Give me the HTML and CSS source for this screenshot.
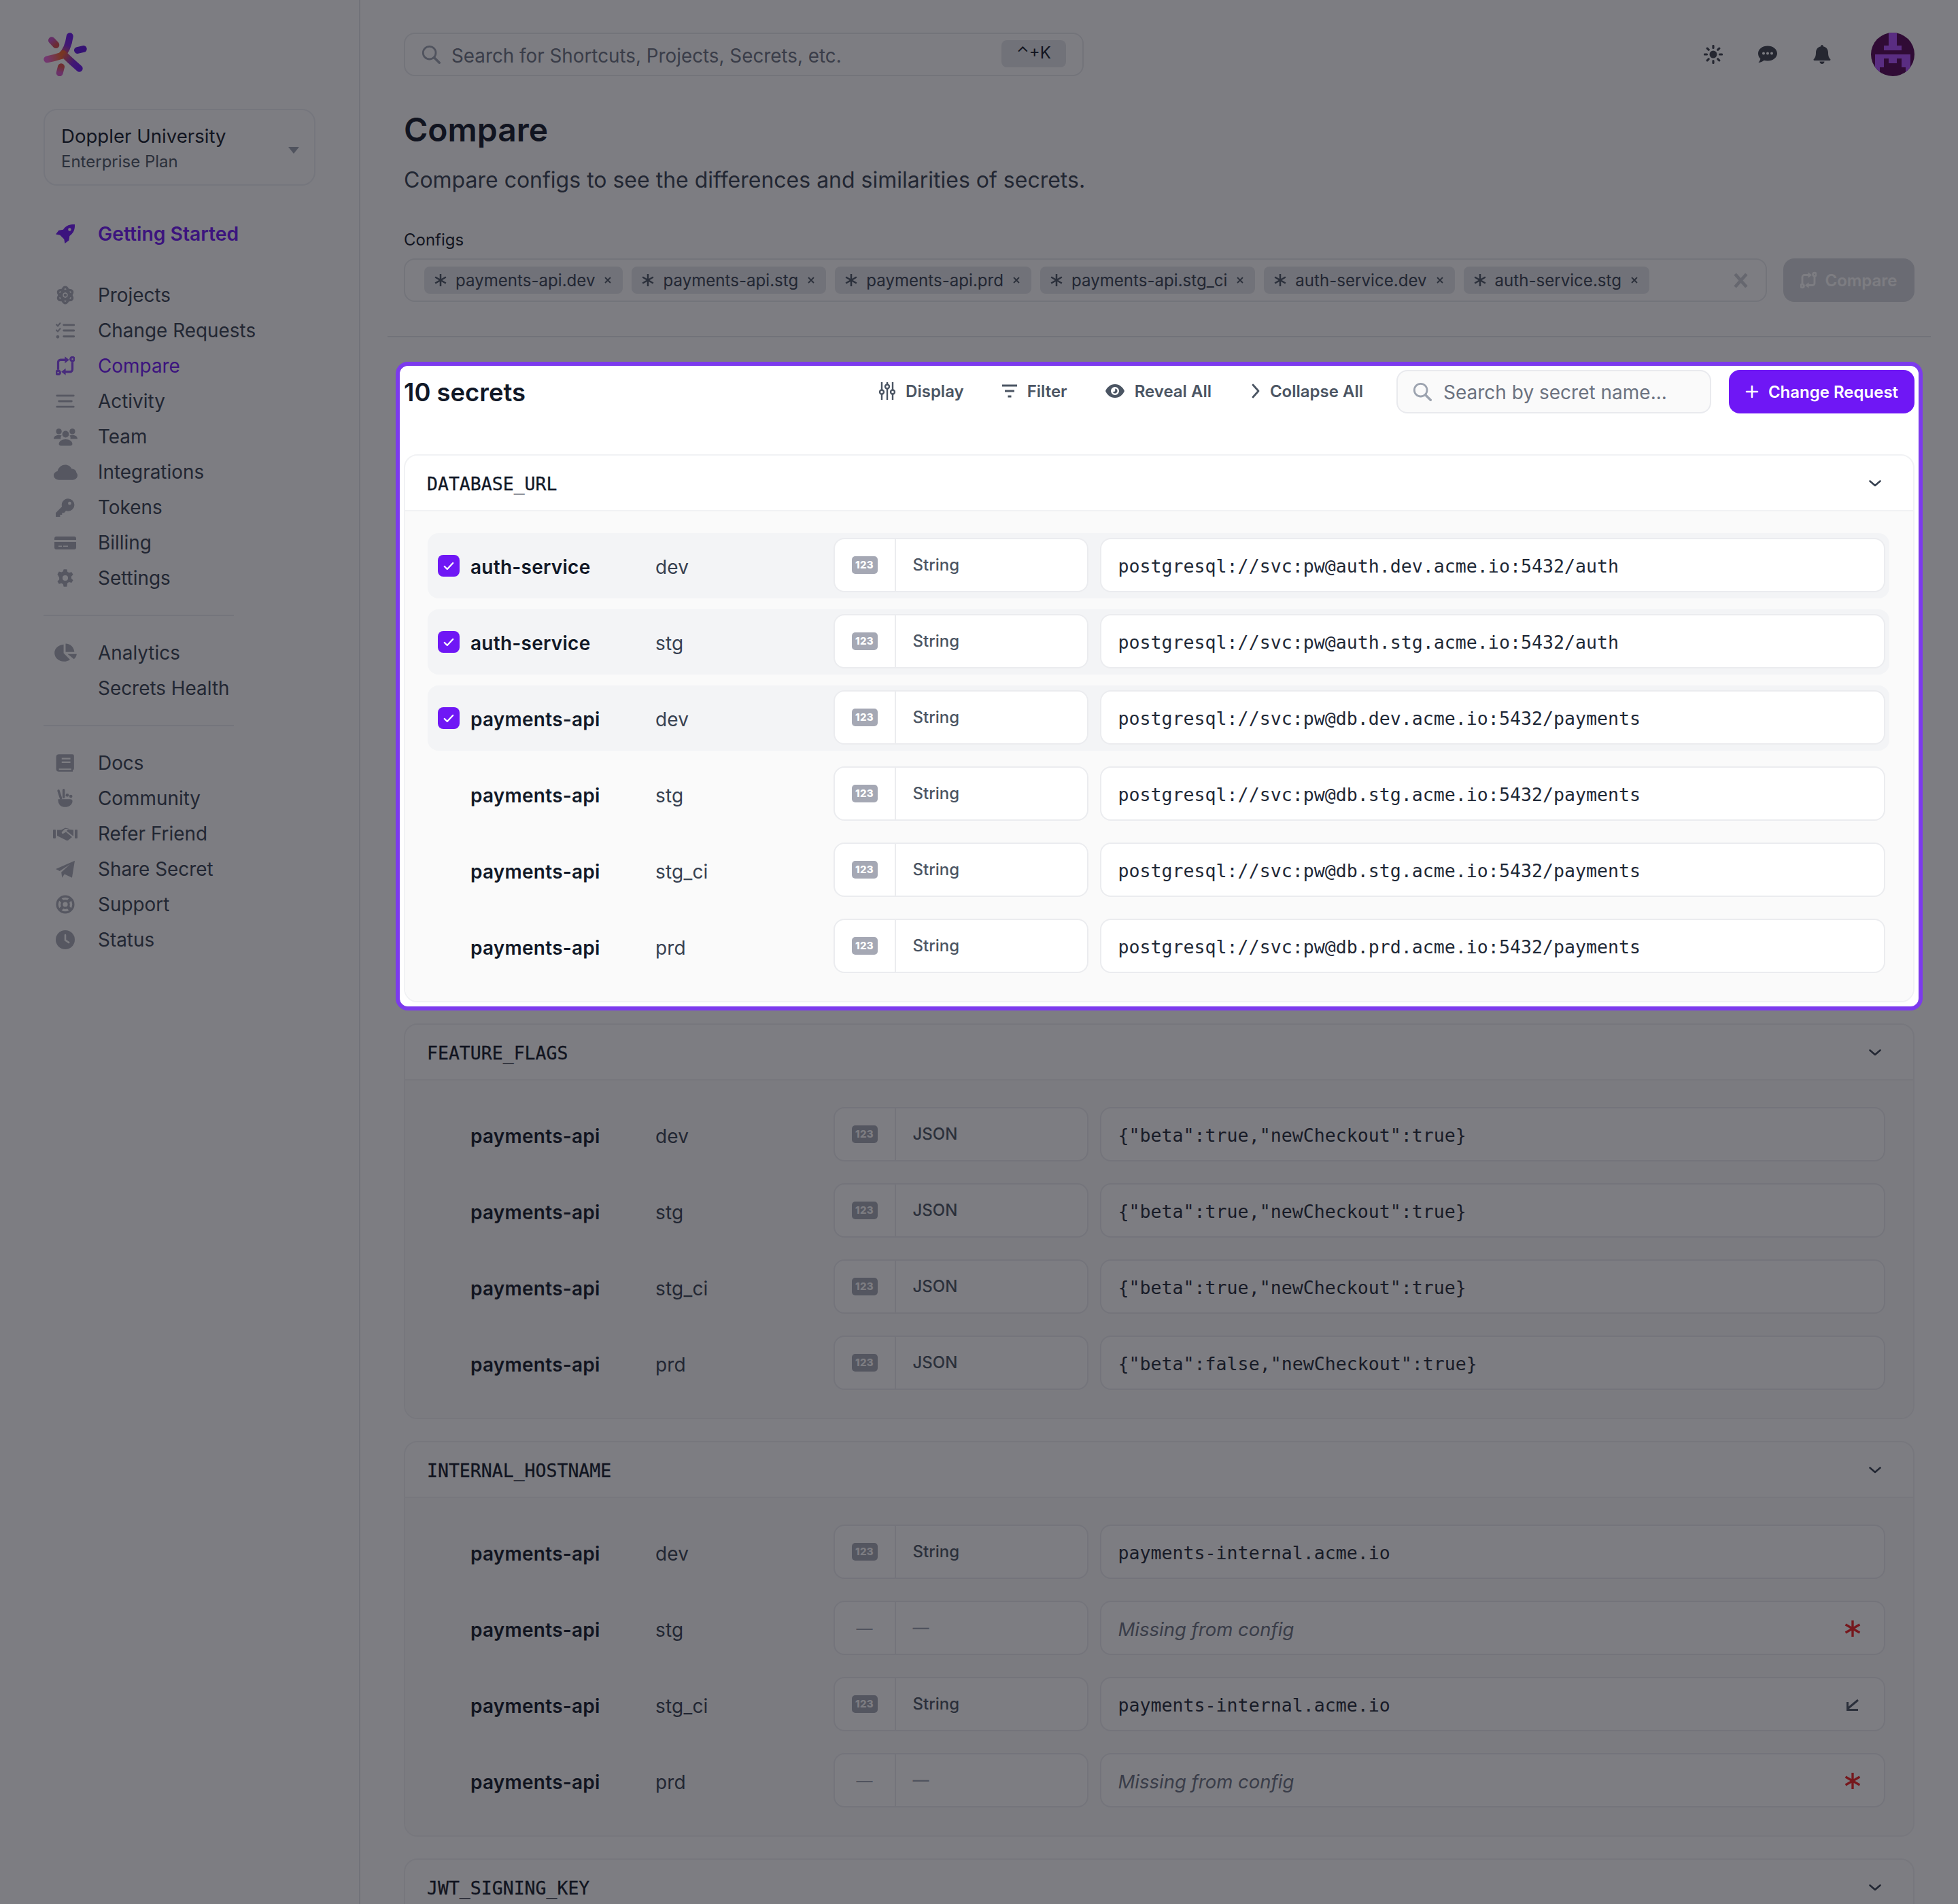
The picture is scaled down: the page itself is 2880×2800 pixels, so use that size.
FILE: index.html
```html
<!DOCTYPE html>
<html lang="en">
<head>
<meta charset="utf-8">
<title>Compare</title>
<link rel="stylesheet" href="styles.css">
</head>
<body>
<svg class="sprite" xmlns="http://www.w3.org/2000/svg">
  <defs>
    <linearGradient id="lg-a" gradientUnits="userSpaceOnUse" x1="26" y1="34" x2="39" y2="5"><stop offset="0" stop-color="#f4622c"/><stop offset=".55" stop-color="#7d22dc"/><stop offset="1" stop-color="#6a14f0"/></linearGradient>
    <linearGradient id="lg-b" gradientUnits="userSpaceOnUse" x1="26" y1="34" x2="5" y2="39"><stop offset="0" stop-color="#f4622c"/><stop offset="1" stop-color="#e865d8"/></linearGradient>
    <linearGradient id="lg-c" gradientUnits="userSpaceOnUse" x1="26" y1="34" x2="53" y2="53"><stop offset="0" stop-color="#f4622c"/><stop offset=".6" stop-color="#7d22dc"/><stop offset="1" stop-color="#6a14f0"/></linearGradient>
    <linearGradient id="lg-d" gradientUnits="userSpaceOnUse" x1="12" y1="11" x2="18" y2="18"><stop offset="0" stop-color="#c850c0"/><stop offset="1" stop-color="#d84a50"/></linearGradient>
    <linearGradient id="lg-e" gradientUnits="userSpaceOnUse" x1="26" y1="50" x2="24" y2="59"><stop offset="0" stop-color="#e0504a"/><stop offset="1" stop-color="#d858c8"/></linearGradient>
  </defs>
  <symbol id="i-rocket" viewBox="0 0 24 24"><path fill="currentColor" fill-rule="evenodd" d="M24 0C17.500-.4 12.500 1.800 9.400 6.600L3.800 7.400 0 12.500l5.400 1 5.100 5.100 1 5.400 5.100-3.800.8-5.600C22.200 11.500 24.400 6.500 24 0zM17.500 8.400a1.900 1.900 0 1 1 0-3.800 1.900 1.900 0 0 1 0 3.800z"/></symbol>
  <symbol id="i-atom" viewBox="0 0 24 24"><g fill="none" stroke="currentColor" stroke-width="3"><ellipse cx="12" cy="12" rx="4.600" ry="10"/><ellipse cx="12" cy="12" rx="4.600" ry="10" transform="rotate(60 12 12)"/><ellipse cx="12" cy="12" rx="4.600" ry="10" transform="rotate(120 12 12)"/></g><circle cx="12" cy="12" r="2" fill="currentColor"/></symbol>
  <symbol id="i-list" viewBox="0 0 24 24"><g fill="none" stroke="currentColor" stroke-linecap="round" stroke-width="2.400"><path d="M10 5h13M10 12h13M10 19.500h13"/><path d="M.8 4.500l1.800 1.800L5.500 2.800M.8 11.500l1.800 1.800 2.900-3.500" stroke-width="1.800"/></g><circle cx="2.500" cy="20" r="2" fill="currentColor"/></symbol>
  <symbol id="i-compare" viewBox="0 0 24 24"><g fill="none" stroke="currentColor" stroke-width="2.800"><circle cx="21" cy="3.500" r="2.400"/><circle cx="3" cy="20.500" r="2.400"/><path d="M3 17V7.500a3 3 0 0 1 3-3h6"/><path d="M21 7v9.500a3 3 0 0 1-3 3h-6"/></g><path fill="currentColor" d="M11.500.2l5.500 4.300-5.500 4.300zM12.500 15.200L7 19.500l5.500 4.300z"/></symbol>
  <symbol id="i-lines" viewBox="0 0 24 24"><path fill="none" stroke="currentColor" stroke-width="2.400" stroke-linecap="round" d="M1.500 5h21M4 12h16M1.500 19h21"/></symbol>
  <symbol id="i-users" viewBox="0 0 30 24"><g fill="currentColor"><circle cx="6.500" cy="5.500" r="3.500"/><circle cx="23.500" cy="5.500" r="3.500"/><circle cx="15" cy="9" r="4.200"/><path d="M0 15c0-3 2.500-5 6.500-5 1.500 0 2.500.3 3.500.8-1 1.200-1.500 2.700-1 4.200z"/><path d="M30 15c0-3-2.500-5-6.500-5-1.500 0-2.500.3-3.500.8 1 1.200 1.500 2.700 1 4.200z"/><path d="M6.500 21.500c0-3.500 3.500-6 8.500-6s8.500 2.500 8.500 6c0 1.500-1 2-2.500 2H9c-1.500 0-2.500-.5-2.500-2z"/></g></symbol>
  <symbol id="i-cloud" viewBox="0 0 30 24"><path fill="currentColor" d="M6.500 22C3 22 0 19.500 0 16.500 0 13.800 2 11.700 4.800 11.200 5.500 7 9.500 3 14.500 3c3.700 0 6.800 2 8 5 3.800.3 6 2.500 6.300 5.500 .9 .8 1.200 1.900 1.200 3 0 3-2.700 5.500-6 5.500z"/></symbol>
  <symbol id="i-key" viewBox="0 0 24 24"><path fill="currentColor" fill-rule="evenodd" d="M15.500 1a8 8 0 0 1 0 16c-.9 0-1.800-.1-2.600-.4L10.500 19H8v2.500H5.500V24H0v-5l7.800-7.800A8 8 0 0 1 15.500 1zm2 4a2 2 0 1 0 0 4 2 2 0 0 0 0-4z"/></symbol>
  <symbol id="i-card" viewBox="0 0 32 24"><path fill="currentColor" fill-rule="evenodd" d="M3 3h26a3 3 0 0 1 3 3v2H0V6a3 3 0 0 1 3-3zM0 11h32v8a3 3 0 0 1-3 3H3a3 3 0 0 1-3-3zm6 5.500v1.500h5v-1.500zm7 0v1.500h7v-1.500z"/></symbol>
  <symbol id="i-gear" viewBox="0 0 24 24"><path fill="currentColor" fill-rule="evenodd" d="M10 1h4l.8 3.200 2 1.100 3.100-.9 2 3.400-2.300 2.300v2.300l2.300 2.300-2 3.400-3.100-.9-2 1.100L14 23h-4l-.8-3.200-2-1.100-3.100.9-2-3.400 2.300-2.300v-2.300L2.100 7.300l2-3.400 3.100.9 2-1.100zm2 7.500a3.500 3.500 0 1 0 0 7 3.500 3.500 0 0 0 0-7z"/></symbol>
  <symbol id="i-pie" viewBox="0 0 30 24"><path fill="currentColor" d="M12.500 1.500v11l8 8c-2 1.500-4.500 2.500-7.500 2.500C6 23 1 18 1 12 1 6.500 6 2 12.500 1.500z"/><path fill="currentColor" d="M15 .5c6 0 10.500 4.500 11 10.500H15z"/><path fill="currentColor" d="M17.500 13.500H29c-.3 2.500-1.500 5-3.500 6.500l-8-6.500z"/></symbol>
  <symbol id="i-book" viewBox="0 0 24 24"><path fill="currentColor" fill-rule="evenodd" d="M4 1h17a2 2 0 0 1 2 2v16a2 2 0 0 1-1.500 1.900V23H4a3.500 3.500 0 0 1-3.500-3.500v-15A3.500 3.500 0 0 1 4 1zm3.500 4.500v2h11v-2zm0 4.500v2h11v-2zM4 19v1.800h15.500V19z"/></symbol>
  <symbol id="i-hand" viewBox="0 0 24 24"><g fill="currentColor"><path d="M3 13h15c2.500 0 3.500 1.500 3 3.500-1 4-4.500 6.500-9 6.500-5 0-9.500-3-9-10z"/><circle cx="19" cy="9.500" r="2"/><circle cx="14.500" cy="8" r="2"/></g><path fill="none" stroke="currentColor" stroke-width="3" stroke-linecap="round" d="M3.500 2.500L6.500 12M10 1.500v9"/></symbol>
  <symbol id="i-shake" viewBox="0 0 36 24"><g fill="currentColor"><rect x="0" y="6" width="4" height="13" rx="1"/><rect x="32" y="6" width="4" height="13" rx="1"/><path d="M6 6.500h6l6-3 6 1.500h-6.500l-4.500 4.500c-.7 1 0 2.500 1.500 2.500 1 0 4-2.500 4.500-2.500l9 7.500-5.500 4.500c-1 .8-2.500.8-3.500 0L6 15z"/><path d="M22 5.500l8 1v8.500h-1L20 8z"/></g></symbol>
  <symbol id="i-plane" viewBox="0 0 24 24"><path fill="currentColor" d="M24 1.500L20.500 23 11 18.500l-3 4.500-1-7 11-10-13 8.500L0 12z"/></symbol>
  <symbol id="i-ring" viewBox="0 0 24 24"><g fill="none" stroke="currentColor" stroke-width="2.800"><circle cx="12" cy="12" r="10.200"/><circle cx="12" cy="12" r="4.500"/><path d="M4.800 4.800l4 4M19.200 4.800l-4 4M4.800 19.200l4-4M19.200 19.200l-4-4" stroke-width="4"/></g></symbol>
  <symbol id="i-clock" viewBox="0 0 24 24"><circle cx="12" cy="12" r="12" fill="currentColor"/><path fill="none" stroke="#fff" stroke-width="2.200" stroke-linecap="round" d="M12 6v6.500l4.500 3"/></symbol>
  <symbol id="i-search" viewBox="0 0 24 24"><g fill="none" stroke="currentColor" stroke-width="2.400" stroke-linecap="round"><circle cx="10" cy="10" r="8"/><path d="M16 16l6.500 6.500" stroke-width="3"/></g></symbol>
  <symbol id="i-star" viewBox="0 0 20 20"><path fill="none" stroke="currentColor" stroke-width="2.800" d="M10 0v20M1.300 5l17.400 10M18.700 5L1.300 15"/></symbol>
  <symbol id="i-x" viewBox="0 0 12 12"><path fill="none" stroke="currentColor" stroke-width="1.800" d="M2 2l8 8M10 2l-8 8"/></symbol>
  <symbol id="i-down" viewBox="0 0 18 10"><path fill="none" stroke="currentColor" stroke-width="2.600" stroke-linecap="round" stroke-linejoin="round" d="M1.500 1.500L9 8l7.500-6.500"/></symbol>
  <symbol id="i-check" viewBox="0 0 18 14"><path fill="none" stroke="#fff" stroke-width="2.600" stroke-linecap="round" stroke-linejoin="round" d="M2 7.500L6.500 12 16 2"/></symbol>
</svg>

<div class="app">
  <aside class="sidebar">
    <svg class="logo" viewBox="0 0 64 64" aria-hidden="true">
      <g fill="none" stroke-width="10" stroke-linecap="round">
        <path stroke="url(#lg-a)" d="M38.700 5.300Q36 25 26 34"/>
        <path stroke="url(#lg-b)" d="M26 34Q17 37 5.300 39.300"/>
        <path stroke="url(#lg-c)" d="M29 31Q38 40 52.700 52.700"/>
        <path stroke="url(#lg-d)" d="M12 11.300L18.300 18"/>
        <path stroke="#5f12de" d="M50 26L58.700 24"/>
        <path stroke="url(#lg-e)" d="M26 50.300L23.700 59.300"/>
      </g>
    </svg>
    <div class="org">
      <div class="org-text">
        <div class="org-name">Doppler University</div>
        <div class="org-plan">Enterprise Plan</div>
      </div>
      <span class="org-caret"></span>
    </div>
    <a class="nav-item nav-start is-active"><span class="nav-icon"><svg class="ic-28"><use href="#i-rocket"/></svg></span><strong>Getting Started</strong></a>
    <nav class="nav-group nav-first">
      <a class="nav-item"><span class="nav-icon"><svg class="ic-28"><use href="#i-atom"/></svg></span>Projects</a>
      <a class="nav-item"><span class="nav-icon"><svg class="ic-28"><use href="#i-list"/></svg></span>Change Requests</a>
      <a class="nav-item is-active"><span class="nav-icon tint"><svg class="ic-28"><use href="#i-compare"/></svg></span>Compare</a>
      <a class="nav-item"><span class="nav-icon"><svg class="ic-28"><use href="#i-lines"/></svg></span>Activity</a>
      <a class="nav-item"><span class="nav-icon"><svg class="ic-wide"><use href="#i-users"/></svg></span>Team</a>
      <a class="nav-item"><span class="nav-icon"><svg class="ic-wide"><use href="#i-cloud"/></svg></span>Integrations</a>
      <a class="nav-item"><span class="nav-icon"><svg class="ic-28"><use href="#i-key"/></svg></span>Tokens</a>
      <a class="nav-item"><span class="nav-icon"><svg class="ic-card"><use href="#i-card"/></svg></span>Billing</a>
      <a class="nav-item"><span class="nav-icon"><svg class="ic-28"><use href="#i-gear"/></svg></span>Settings</a>
    </nav>
    <hr class="nav-rule">
    <nav class="nav-group">
      <a class="nav-item"><span class="nav-icon"><svg class="ic-wide"><use href="#i-pie"/></svg></span>Analytics</a>
      <a class="nav-item"><span class="nav-icon"></span>Secrets Health</a>
    </nav>
    <hr class="nav-rule">
    <nav class="nav-group">
      <a class="nav-item"><span class="nav-icon"><svg class="ic-28"><use href="#i-book"/></svg></span>Docs</a>
      <a class="nav-item"><span class="nav-icon"><svg class="ic-28"><use href="#i-hand"/></svg></span>Community</a>
      <a class="nav-item"><span class="nav-icon"><svg class="ic-shake"><use href="#i-shake"/></svg></span>Refer Friend</a>
      <a class="nav-item"><span class="nav-icon"><svg class="ic-28"><use href="#i-plane"/></svg></span>Share Secret</a>
      <a class="nav-item"><span class="nav-icon"><svg class="ic-28"><use href="#i-ring"/></svg></span>Support</a>
      <a class="nav-item"><span class="nav-icon"><svg class="ic-28"><use href="#i-clock"/></svg></span>Status</a>
    </nav>
  </aside>

  <main class="main">
    <header class="topbar">
      <div class="global-search">
        <svg class="search-icon"><use href="#i-search"/></svg>
        <span class="global-search-text">Search for Shortcuts, Projects, Secrets, etc.</span>
        <kbd class="kbd">⌃+K</kbd>
      </div>
      <div class="top-icons">
        <span class="top-icon">
          <svg width="28" height="28" viewBox="0 0 28 28"><circle cx="14" cy="14" r="5.500" fill="currentColor"/><path fill="none" stroke="currentColor" stroke-width="3.200" stroke-linecap="round" d="M14 1.500v3M14 23.500v3M1.500 14h3M23.500 14h3M5.200 5.200l2 2M20.800 20.800l2 2M22.800 5.200l-2 2M7.200 20.800l-2 2"/></svg>
        </span>
        <span class="top-icon">
          <svg width="28" height="28" viewBox="0 0 28 28"><path fill="currentColor" fill-rule="evenodd" d="M14 1.500c7.700 0 14 4.900 14 11s-6.300 11-14 11c-1.900 0-3.700-.3-5.300-.8C6.500 24.600 3.600 25.800 0.500 26c1.400-1.500 2.500-3.500 2.900-5.500C1.200 18.500 0 15.600 0 12.500c0-6.100 6.300-11 14-11zM8 10.500a2 2 0 1 0 0 4 2 2 0 0 0 0-4zm6 0a2 2 0 1 0 0 4 2 2 0 0 0 0-4zm6 0a2 2 0 1 0 0 4 2 2 0 0 0 0-4z"/></svg>
        </span>
        <span class="top-icon">
          <svg width="26" height="28" viewBox="0 0 26 28"><path fill="currentColor" d="M13 0c1 0 1.700.8 1.700 1.800v.4C19.500 3 22 7 22 11.500c0 5 1.300 7.500 3.200 9.500.6.700.3 2-1 2H1.800c-1.300 0-1.600-1.300-1-2C2.700 19 4 16.500 4 11.500 4 7 6.500 3 11.300 2.200v-.4C11.300.8 12 0 13 0zM9.500 24.500h7c0 2-1.500 3.500-3.500 3.500s-3.500-1.500-3.500-3.500z"/></svg>
        </span>
        <svg class="avatar" viewBox="0 0 10 10" shape-rendering="crispEdges">
          <rect class="av-dark" width="10" height="10"/>
          <path class="av-light" d="M4 0h2v3H4zM3 3h4v1H3zM1 5h8v1H1zM1 6h2v2H1zM7 6h2v2H7zM4 6h2v1H4zM1 8h1v1H1zM8 8h1v1H8z"/>
        </svg>
      </div>
    </header>

    <h1 class="page-title">Compare</h1>
    <p class="page-sub">Compare configs to see the differences and similarities of secrets.</p>

    <label class="field-label">Configs</label>
    <div class="config-row">
      <div class="config-field">
        <span class="chip"><svg class="chip-star"><use href="#i-star"/></svg>payments-api.dev<svg class="chip-x"><use href="#i-x"/></svg></span>
        <span class="chip"><svg class="chip-star"><use href="#i-star"/></svg>payments-api.stg<svg class="chip-x"><use href="#i-x"/></svg></span>
        <span class="chip"><svg class="chip-star"><use href="#i-star"/></svg>payments-api.prd<svg class="chip-x"><use href="#i-x"/></svg></span>
        <span class="chip"><svg class="chip-star"><use href="#i-star"/></svg>payments-api.stg_ci<svg class="chip-x"><use href="#i-x"/></svg></span>
        <span class="chip"><svg class="chip-star"><use href="#i-star"/></svg>auth-service.dev<svg class="chip-x"><use href="#i-x"/></svg></span>
        <span class="chip"><svg class="chip-star"><use href="#i-star"/></svg>auth-service.stg<svg class="chip-x"><use href="#i-x"/></svg></span>
        <svg class="clear-x" viewBox="0 0 20 20"><path fill="none" stroke="currentColor" stroke-width="4.500" d="M2 1l16 18M18 1L2 19"/></svg>
      </div>
      <button class="compare-btn"><svg class="compare-btn-ic"><use href="#i-compare"/></svg>Compare</button>
    </div>
    <hr class="main-rule">

    <section class="spotlight">
      <div class="toolbar">
        <h2 class="count">10 secrets</h2>
        <div class="actions">
          <span class="action">
            <svg width="24" height="28" viewBox="0 0 24 28"><g fill="none" stroke="currentColor" stroke-width="2.400"><path d="M4 1v11M4 19v8M12 1v3M12 11v16M20 1v11M20 19v8"/><circle cx="4" cy="15.500" r="3"/><circle cx="12" cy="7.500" r="3"/><circle cx="20" cy="15.500" r="3"/></g></svg>
            Display</span>
          <span class="action">
            <svg width="22" height="22" viewBox="0 0 22 22"><path fill="none" stroke="currentColor" stroke-width="3" d="M0 3h22M4 11h14M8.500 19h5"/></svg>
            Filter</span>
          <span class="action">
            <svg width="28" height="22" viewBox="0 0 28 22"><path fill="currentColor" fill-rule="evenodd" d="M14 1c7 0 12 5 14 10-2 5-7 10-14 10S2 16 0 11C2 6 7 1 14 1zm0 4a6 6 0 1 0 0 12 6 6 0 0 0 0-12zm0 2.500a3.500 3.500 0 1 1-3.300 4.700c.5.200 2.800-.2 3.300-1 .6-.9.300-3.300 0-3.700z"/></svg>
            Reveal All</span>
          <span class="action">
            <svg width="12" height="22" viewBox="0 0 12 22"><path fill="none" stroke="currentColor" stroke-width="2.800" stroke-linecap="round" stroke-linejoin="round" d="M2 2l8 9-8 9"/></svg>
            Collapse All</span>
        </div>
        <div class="secret-search">
          <svg class="search-icon"><use href="#i-search"/></svg>
          <span class="secret-search-text">Search by secret name...</span>
        </div>
        <button class="cr-btn"><svg width="20" height="20" viewBox="0 0 20 20"><path fill="none" stroke="currentColor" stroke-width="2.600" stroke-linecap="round" d="M10 2v16M2 10h16"/></svg>Change Request</button>
      </div>

      <article class="card">
        <header class="card-head"><span class="secret-name">DATABASE_URL</span><svg class="chev"><use href="#i-down"/></svg></header>
        <div class="card-body">
          <div class="row is-selected"><span class="check"><svg class="check-mark"><use href="#i-check"/></svg></span><span class="project">auth-service</span><span class="env">dev</span><div class="type"><span class="type-ic"><span class="badge">123</span></span><span class="type-name">String</span></div><div class="value"><span class="mono">postgresql://svc:pw@auth.dev.acme.io:5432/auth</span></div></div>
          <div class="row is-selected"><span class="check"><svg class="check-mark"><use href="#i-check"/></svg></span><span class="project">auth-service</span><span class="env">stg</span><div class="type"><span class="type-ic"><span class="badge">123</span></span><span class="type-name">String</span></div><div class="value"><span class="mono">postgresql://svc:pw@auth.stg.acme.io:5432/auth</span></div></div>
          <div class="row is-selected"><span class="check"><svg class="check-mark"><use href="#i-check"/></svg></span><span class="project">payments-api</span><span class="env">dev</span><div class="type"><span class="type-ic"><span class="badge">123</span></span><span class="type-name">String</span></div><div class="value"><span class="mono">postgresql://svc:pw@db.dev.acme.io:5432/payments</span></div></div>
          <div class="row"><span class="check-slot"></span><span class="project">payments-api</span><span class="env">stg</span><div class="type"><span class="type-ic"><span class="badge">123</span></span><span class="type-name">String</span></div><div class="value"><span class="mono">postgresql://svc:pw@db.stg.acme.io:5432/payments</span></div></div>
          <div class="row"><span class="check-slot"></span><span class="project">payments-api</span><span class="env">stg_ci</span><div class="type"><span class="type-ic"><span class="badge">123</span></span><span class="type-name">String</span></div><div class="value"><span class="mono">postgresql://svc:pw@db.stg.acme.io:5432/payments</span></div></div>
          <div class="row"><span class="check-slot"></span><span class="project">payments-api</span><span class="env">prd</span><div class="type"><span class="type-ic"><span class="badge">123</span></span><span class="type-name">String</span></div><div class="value"><span class="mono">postgresql://svc:pw@db.prd.acme.io:5432/payments</span></div></div>
        </div>
      </article>
    </section>

    <article class="card card-after-spot">
      <header class="card-head"><span class="secret-name">FEATURE_FLAGS</span><svg class="chev"><use href="#i-down"/></svg></header>
      <div class="card-body">
        <div class="row"><span class="check-slot"></span><span class="project">payments-api</span><span class="env">dev</span><div class="type"><span class="type-ic"><span class="badge">123</span></span><span class="type-name">JSON</span></div><div class="value"><span class="mono">{"beta":true,"newCheckout":true}</span></div></div>
        <div class="row"><span class="check-slot"></span><span class="project">payments-api</span><span class="env">stg</span><div class="type"><span class="type-ic"><span class="badge">123</span></span><span class="type-name">JSON</span></div><div class="value"><span class="mono">{"beta":true,"newCheckout":true}</span></div></div>
        <div class="row"><span class="check-slot"></span><span class="project">payments-api</span><span class="env">stg_ci</span><div class="type"><span class="type-ic"><span class="badge">123</span></span><span class="type-name">JSON</span></div><div class="value"><span class="mono">{"beta":true,"newCheckout":true}</span></div></div>
        <div class="row"><span class="check-slot"></span><span class="project">payments-api</span><span class="env">prd</span><div class="type"><span class="type-ic"><span class="badge">123</span></span><span class="type-name">JSON</span></div><div class="value"><span class="mono">{"beta":false,"newCheckout":true}</span></div></div>
      </div>
    </article>

    <article class="card">
      <header class="card-head"><span class="secret-name">INTERNAL_HOSTNAME</span><svg class="chev"><use href="#i-down"/></svg></header>
      <div class="card-body">
        <div class="row"><span class="check-slot"></span><span class="project">payments-api</span><span class="env">dev</span><div class="type"><span class="type-ic"><span class="badge">123</span></span><span class="type-name">String</span></div><div class="value"><span class="mono">payments-internal.acme.io</span></div></div>
        <div class="row"><span class="check-slot"></span><span class="project">payments-api</span><span class="env">stg</span><div class="type"><span class="type-ic"><span class="dash">—</span></span><span class="type-name dash">—</span></div><div class="value"><span class="missing">Missing from config</span><svg class="value-flag flag-red"><use href="#i-star"/></svg></div></div>
        <div class="row"><span class="check-slot"></span><span class="project">payments-api</span><span class="env">stg_ci</span><div class="type"><span class="type-ic"><span class="badge">123</span></span><span class="type-name">String</span></div><div class="value"><span class="mono">payments-internal.acme.io</span><svg class="value-flag flag-gray" viewBox="0 0 20 20"><path fill="none" stroke="currentColor" stroke-width="3" d="M18 3L3 15.500M2.500 6v11.500H18"/></svg></div></div>
        <div class="row"><span class="check-slot"></span><span class="project">payments-api</span><span class="env">prd</span><div class="type"><span class="type-ic"><span class="dash">—</span></span><span class="type-name dash">—</span></div><div class="value"><span class="missing">Missing from config</span><svg class="value-flag flag-red"><use href="#i-star"/></svg></div></div>
      </div>
    </article>

    <article class="card">
      <header class="card-head"><span class="secret-name">JWT_SIGNING_KEY</span><svg class="chev"><use href="#i-down"/></svg></header>
      <div class="card-body card-body-cut"></div>
    </article>
  </main>
</div>
<div class="overlay"></div>
</body>
</html>
```
FILE: styles.css
```css
* { box-sizing: border-box; }
html, body { margin: 0; padding: 0; height: 2800px; overflow: hidden; background: #fff; }
body { font-family: Inter, "Liberation Sans", sans-serif; color: #111827; position: relative; }
.sprite { position: absolute; width: 0; height: 0; overflow: hidden; }

.overlay { position: fixed; inset: 0; background: rgba(19, 19, 27, .55); z-index: 10; }

.app { display: flex; height: 2800px; overflow: hidden; }

/* Sidebar */
.sidebar { flex: 0 0 530px; border-right: 2px solid #e5e7eb; padding: 48px 0 0 64px; }
.logo { display: block; width: 64px; height: 64px; }
.org { margin-top: 48px; width: 400px; height: 113px; border: 2px solid #eef0f3; border-radius: 20px; display: flex; align-items: center; padding: 2px 22px 0 24px; }
.org-text { flex: 1; }
.org-name { font-size: 27.600px; line-height: 40px; color: #111827; }
.org-plan { font-size: 24px; line-height: 36px; color: #4b5563; }
.org-caret { width: 0; height: 0; border-left: 8px solid transparent; border-right: 8px solid transparent; border-top: 10px solid #9ca3af; margin-top: 6px; }

.nav-item { display: flex; align-items: center; height: 52px; font-size: 27.900px; color: #374151; }
.nav-item strong { font-weight: 600; font-size: 28.300px; }
.nav-item.is-active { color: #6f17f5; }
.nav-start { margin-top: 45px; }
.nav-first { margin-top: 38px; }
.nav-icon { flex: 0 0 64px; display: flex; justify-content: center; align-items: center; margin-right: 16px; color: #a8abb6; }
.nav-icon.tint { color: #8b4cf2; }
.nav-start .nav-icon { color: #6f17f5; }
.ic-28 { width: 28px; height: 28px; }
.ic-wide { width: 35px; height: 28px; }
.ic-card { width: 32px; height: 26px; }
.ic-shake { width: 36px; height: 24px; }
.nav-rule { border: 0; border-top: 2px solid #eceef1; width: 280px; margin: 28px 0 28px; }

/* Main */
.main { flex: 1; min-width: 0; padding: 48px 64px 0 64px; }
.topbar { display: flex; align-items: center; height: 64px; }
.global-search { width: 1000px; height: 64px; border: 2px solid #e9eaee; border-radius: 16px; display: flex; align-items: center; padding: 0 24px 0 24px; }
.search-icon { width: 28px; height: 28px; color: #9ca3af; flex: none; }
.global-search-text { margin-left: 16px; padding-top: 3px; font-size: 27.800px; color: #6b7280; flex: 1; }
.kbd { width: 95px; height: 40px; background: #e5e7eb; border-radius: 8px; font-family: Inter, sans-serif; font-size: 24px; line-height: 38px; text-align: center; color: #111827; margin-top: -2px; }
.top-icons { margin-left: auto; display: flex; align-items: center; }
.top-icon { width: 80px; display: flex; justify-content: center; color: #3c414d; }
.avatar { width: 64px; height: 64px; border-radius: 50%; margin-left: 32px; }
.av-dark { fill: #540454; }
.av-light { fill: #b24eff; }

.page-title { margin: 47px 0 0; font-size: 48px; line-height: 64px; font-weight: 600; color: #111827; }
.page-sub { margin: 18px 0 0; font-size: 32px; line-height: 48px; color: #374151; }
.field-label { display: block; margin-top: 46px; font-size: 24px; line-height: 36px; color: #111827; }
.config-row { display: flex; gap: 24px; margin-top: 9px; }
.config-field { flex: 1; height: 64px; border: 2px solid #e9eaee; border-radius: 16px; display: flex; align-items: center; gap: 13px; padding: 0 26px 0 28px; }
.chip { height: 40px; background: #e5e7eb; border-radius: 8px; display: flex; align-items: center; padding: 0 16px 0 15px; font-size: 24.100px; color: #374151; white-space: nowrap; }
.chip-star { width: 18px; height: 20px; margin-right: 13px; color: #4b5563; }
.chip-x { width: 12px; height: 12px; margin-left: 13px; color: #4b5563; }
.clear-x { width: 21px; height: 21px; margin-left: auto; color: #ccced4; }
.compare-btn { flex: 0 0 193px; height: 64px; border: 0; border-radius: 16px; background: #d6d8dd; color: #fff; font: 600 24px Inter, sans-serif; display: flex; align-items: center; justify-content: center; gap: 12px; }
.compare-btn-ic { width: 24px; height: 28px; }
.main-rule { border: 0; border-top: 2px solid #e5e7eb; margin: 50px -24px 0 -24px; }

/* Spotlight panel */
.spotlight { position: relative; z-index: 20; margin: 36px -12px 0; padding: 6px; border: 6px solid #7c3aed; border-radius: 18px; background: #fff; }
.toolbar { display: flex; align-items: center; height: 64px; }
.count { margin: 0; padding-top: 2px; font-size: 36.400px; font-weight: 600; line-height: 64px; color: #111827; }
.actions { margin-left: auto; display: flex; align-items: center; gap: 56px; margin-right: 49px; }
.action { display: flex; align-items: center; gap: 15px; font-size: 24px; font-weight: 600; color: #4b5563; margin-top: -2px; }
.action:last-child { margin-left: 3px; }
.secret-search { width: 463px; height: 64px; background: #fafafa; border: 2px solid #e9eaee; border-radius: 16px; display: flex; align-items: center; padding: 0 0 0 22px; }
.secret-search-text { margin-left: 17px; padding-top: 2px; font-size: 28px; color: #6b7280; }
.cr-btn { margin-left: 26px; width: 273px; height: 64px; border: 0; border-radius: 16px; background: #6f17f5; color: #fff; font: 600 24px Inter, sans-serif; display: flex; align-items: center; justify-content: center; gap: 14px; }

/* Secret cards */
.card { border: 2px solid #f1f2f4; border-radius: 20px; overflow: hidden; margin-top: 32px; background: #fff; }
.spotlight .card { margin-top: 60px; }
.card-after-spot { margin-top: 19px; }
.card-head { height: 82px; display: flex; align-items: center; justify-content: space-between; padding: 2px 47px 0 32px; border-bottom: 2px solid #f1f2f4; }
.secret-name { font-family: "DejaVu Sans Mono", monospace; font-size: 26.500px; color: #111827; -webkit-text-stroke: .3px #111827; padding-top: 1px; }
.chev { width: 18px; height: 10px; color: #374151; }
.card-body { background: #fafafa; padding: 32px 35px 32px 33px; display: flex; flex-direction: column; gap: 16px; }
.card-body-cut { height: 100px; }

.row { display: flex; align-items: center; height: 96px; padding: 8px 6px 8px 15px; border-radius: 16px; flex: none; }
.row.is-selected { background: #f3f4f6; }
.check { flex: 0 0 32px; height: 32px; border-radius: 8px; background: #6f17f5; display: flex; align-items: center; justify-content: center; margin-right: 16px; }
.check-mark { width: 16px; height: 13px; }
.check-slot { flex: 0 0 32px; margin-right: 16px; }
.project { flex: 0 0 272px; font-size: 28px; letter-spacing: .25px; font-weight: 600; color: #111827; padding-top: 4px; }
.env { flex: 0 0 261.500px; font-size: 28px; letter-spacing: .2px; color: #374151; padding-top: 4px; }
.type { flex: 0 0 375px; height: 80px; margin-bottom: 2px; background: #fff; border: 2px solid #ebecef; border-radius: 16px; display: flex; align-items: center; }
.type-ic { flex: 0 0 90px; align-self: stretch; border-right: 2px solid #ebecef; display: flex; align-items: center; justify-content: center; }
.badge { width: 38px; height: 26px; border-radius: 5px; background: #a5a8b4; color: #fff; font-size: 15px; font-weight: 800; line-height: 26px; text-align: center; letter-spacing: .3px; }
.type-name { margin-left: 25px; margin-bottom: 1px; font-size: 24px; font-weight: 500; color: #4b5563; }
.dash { color: #9ca3af; font-size: 24px; }
.value { flex: 1; height: 80px; margin-left: 17px; margin-bottom: 2px; background: #fff; border: 2px solid #ebecef; border-radius: 16px; display: flex; align-items: center; padding: 0 34px 0 25px; }
.mono { font-family: "DejaVu Sans Mono", monospace; font-size: 26.600px; color: #1f2937; padding-top: 2px; }
.missing { font-size: 27.500px; font-style: italic; color: #6b7280; padding-top: 4px; }
.value-flag { width: 24px; height: 24px; margin-left: auto; margin-top: 2px; }
.flag-red { color: #ef2020; }
.flag-gray { color: #4b5563; width: 20px; height: 20px; margin-right: 2px; }
```
